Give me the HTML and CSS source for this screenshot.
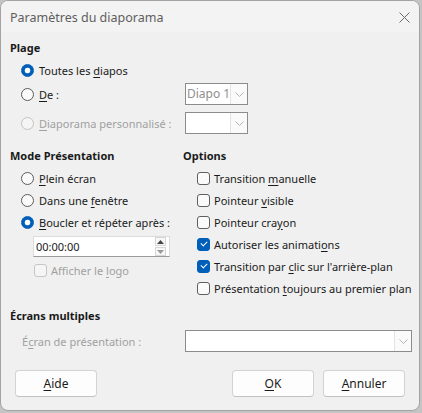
FILE: index.html
```html
<!DOCTYPE html>
<html lang="fr">
<head>
  <meta charset="UTF-8">
  <title>Paramètres du diaporama</title>
  <link rel="stylesheet" href="styles.css">
</head>
<body>

  <div class="window">
    <div class="titlebar">
      <span class="title">Paramètres du diaporama</span>
      <svg class="close" width="11" height="11" viewBox="0 0 11 11">
        <path d="M0.5 0.5 L10.5 10.5 M10.5 0.5 L0.5 10.5" stroke="#6a6a6a" stroke-width="1" fill="none"/>
      </svg>
    </div>

    <div class="content">
      <!-- Plage -->
      <div class="heading">Plage</div>
      <div class="row indent"><span class="radio checked"></span><span>Toutes les <u>d</u>iapos</span></div>
      <div class="line gap-s">
        <div class="row indent"><span class="radio"></span><span><u>D</u>e :</span></div>
        <div class="select small">
          <span class="value muted">Diapo 1</span>
          <span class="arrow"><svg width="9" height="5" viewBox="0 0 9 5"><path d="M0.5 0.5 L4.5 4.5 L8.5 0.5" stroke="#b5b5b5" fill="none"/></svg></span>
        </div>
      </div>
      <div class="line gap-m">
        <div class="row indent disabled"><span class="radio off"></span><span><u>D</u>iaporama personnalisé :</span></div>
        <div class="select small">
          <span class="value"></span>
          <span class="arrow"><svg width="9" height="5" viewBox="0 0 9 5"><path d="M0.5 0.5 L4.5 4.5 L8.5 0.5" stroke="#b5b5b5" fill="none"/></svg></span>
        </div>
      </div>

      <!-- Mode + Options -->
      <div class="columns">
        <div class="col">
          <div class="heading">Mode Présentation</div>
          <div class="row indent"><span class="radio"></span><span><u>P</u>lein écran</span></div>
          <div class="row indent"><span class="radio"></span><span>Dans une <u>f</u>enêtre</span></div>
          <div class="row indent"><span class="radio checked"></span><span><u>B</u>oucler et répéter après :</span></div>
          <div class="spin">
            <span class="spin-value">00:00:00</span>
            <span class="spin-btns">
              <span class="spin-btn"><svg width="7" height="4" viewBox="0 0 7 4"><path d="M0 4 L3.5 0 L7 4 Z" fill="#444"/></svg></span>
              <span class="spin-btn"><svg width="7" height="4" viewBox="0 0 7 4"><path d="M0 0 L3.5 4 L7 0 Z" fill="#9a9a9a"/></svg></span>
            </span>
          </div>
          <div class="row logo disabled"><span class="check off"></span><span>Afficher le <u>l</u>ogo</span></div>
        </div>
        <div class="col">
          <div class="heading">Options</div>
          <div class="row indent-c"><span class="check"></span><span>Transition <u>m</u>anuelle</span></div>
          <div class="row indent-c"><span class="check"></span><span>Pointeur <u>v</u>isible</span></div>
          <div class="row indent-c"><span class="check"></span><span>Pointeur cra<u>y</u>on</span></div>
          <div class="row indent-c"><span class="check checked"></span><span>Autoriser les animati<u>o</u>ns</span></div>
          <div class="row indent-c"><span class="check checked"></span><span>Transition par <u>c</u>lic sur l'arrière-plan</span></div>
          <div class="row indent-c"><span class="check"></span><span>Présentation <u>t</u>oujours au premier plan</span></div>
        </div>
      </div>

      <!-- Écrans multiples -->
      <div class="heading multi">Écrans multiples</div>
      <div class="line gap-xs">
        <div class="row screen disabled"><span>É<u>c</u>ran de présentation :</span></div>
        <div class="select wide">
          <span class="value"></span>
          <span class="arrow"><svg width="9" height="5" viewBox="0 0 9 5"><path d="M0.5 0.5 L4.5 4.5 L8.5 0.5" stroke="#b5b5b5" fill="none"/></svg></span>
        </div>
      </div>

      <div class="buttons">
        <button type="button"><u>A</u>ide</button>
        <span class="spacer"></span>
        <button type="button"><u>O</u>K</button>
        <button type="button"><u>A</u>nnuler</button>
      </div>
    </div>
  </div>

</body>
</html>
```

FILE: styles.css
```css
body {
  margin: 0;
  background-color: #c4c4c4;
  font-family: "Noto Sans", "DejaVu Sans", sans-serif;
  font-size: 11px;
  color: #1a1a1a;
}
u {
  text-underline-offset: 2px;
}
.window {
  width: 418px;
  height: 409px;
  border: 1px solid #a3a3a3;
  border-radius: 8px;
  background-color: #f0f0f0;
  overflow: hidden;
}
.titlebar {
  height: 30px;
  display: flex;
  align-items: center;
  justify-content: space-between;
  padding: 1px 9px 0 9px;
  background-color: #f3f3f3;
}
.title {
  color: #5e5e5e;
  font-size: 12.5px;
}
.content {
  padding: 5px 9px 0;
}
.heading {
  height: 22px;
  line-height: 22px;
  font-weight: bold;
}
.heading.multi {
  margin-top: 6px;
}
.row {
  height: 22px;
  display: flex;
  align-items: center;
  gap: 5px;
  white-space: nowrap;
}
.indent {
  padding-left: 11px;
}
.indent-c {
  padding-left: 14px;
  gap: 4px;
}
.disabled {
  color: #a0a0a0;
}
.line {
  display: grid;
  grid-template-columns: 175px auto;
  align-items: center;
}
.gap-s { margin-top: 2px; }
.gap-m { margin-top: 7px; }
.gap-xs { margin-top: 3px; }

/* radio buttons */
.radio {
  width: 11px;
  height: 11px;
  border: 1px solid #5b5b5b;
  border-radius: 50%;
  background-color: #fafafa;
  flex-shrink: 0;
}
.radio.checked {
  border-color: #005fb8;
  background: radial-gradient(circle, #ffffff 2.5px, #005fb8 3.2px);
}
.radio.off {
  border-color: #c2c2c2;
  background-color: #f5f5f5;
}

/* check boxes */
.check {
  position: relative;
  width: 11px;
  height: 11px;
  border: 1px solid #5f5f5f;
  border-radius: 3px;
  background-color: #fafafa;
  flex-shrink: 0;
}
.check.checked {
  border-color: #005fb8;
  background-color: #005fb8;
}
.check.checked::after {
  content: "";
  position: absolute;
  left: 3.5px;
  top: 1.5px;
  width: 3px;
  height: 5px;
  border-right: 1.3px solid #fff;
  border-bottom: 1.3px solid #fff;
  transform: rotate(45deg);
}
.check.off {
  border-color: #c6c6c6;
  background-color: #f5f5f5;
}

/* drop-down lists */
.select {
  height: 20px;
  display: flex;
  border: 1px solid #8c8c8c;
  background-color: #ffffff;
}
.select.small {
  width: 61px;
}
.select.wide {
  width: 225px;
}
.select .value {
  flex: 1;
  padding-left: 1px;
  line-height: 20px;
  font-size: 12px;
  white-space: nowrap;
  overflow: hidden;
}
.muted {
  color: #8e8e8e;
}
.select .arrow {
  width: 16px;
  flex-shrink: 0;
  display: flex;
  align-items: center;
  justify-content: center;
  border-left: 1px solid #e3e3e3;
  background-color: #fafafa;
}

/* time field */
.spin {
  width: 135px;
  height: 19px;
  margin: 3px 0 0 23px;
  display: flex;
  align-items: center;
  background-color: #ffffff;
  border: 1px solid #dcdcdc;
  border-bottom-color: #9a9a9a;
}
.spin-value {
  flex: 1;
  padding-left: 2px;
}
.spin-btns {
  display: flex;
  flex-direction: column;
  gap: 1px;
  margin-right: 3px;
}
.spin-btn {
  width: 9px;
  height: 7px;
  display: flex;
  align-items: center;
  justify-content: center;
  border: 1px solid #d6d6d6;
  background-color: #f7f7f7;
}
.logo {
  margin-top: 2px;
  padding-left: 24px;
  gap: 4px;
}

.columns {
  display: grid;
  grid-template-columns: 173px 1fr;
  margin-top: 11px;
}
.screen {
  padding-left: 12px;
}

/* bottom buttons */
.buttons {
  display: flex;
  gap: 9px;
  margin-top: 18px;
  padding: 0 5px 0 5px;
}
.spacer {
  flex: 1;
}
button {
  width: 82px;
  height: 27px;
  font-family: inherit;
  font-size: 12px;
  color: #1a1a1a;
  background-color: #fdfdfd;
  border: 1px solid #d3d3d3;
  border-bottom-color: #c2c2c2;
  border-radius: 4px;
}
```
